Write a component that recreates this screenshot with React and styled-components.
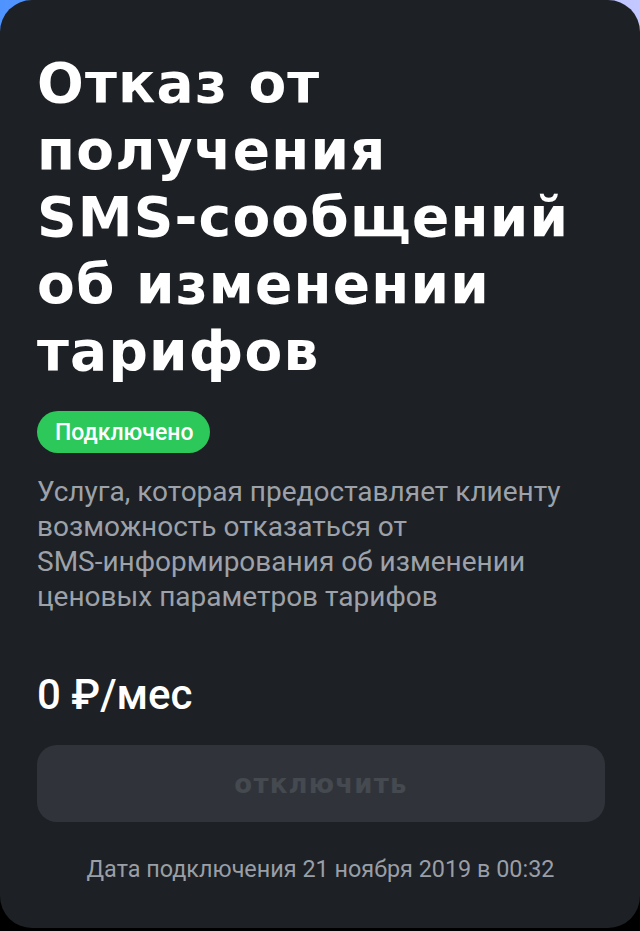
import styled, { createGlobalStyle } from 'styled-components';

const Global = createGlobalStyle`
    html, body {
        margin: 0;
        padding: 0;
    }
    body {
        background: linear-gradient(90deg, #4f93ff 0%, #8fb0ff 60%, #c4c8ff 100%) top / 100% 60px no-repeat, #000;
        font-family: Roboto, "Noto Sans", sans-serif;
    }
`

export default function App() {
    return (
        <>
            <Global />
            <Card>
                <Title>
                    Отказ от<br />
                    получения<br />
                    SMS-сообщений<br />
                    об изменении<br />
                    тарифов
                </Title>
                <Badge>Подключено</Badge>
                <Description>
                    {'Услуга, которая предоставляет клиенту возможность отказаться от SMS\u2011информирования об изменении ценовых параметров тарифов'}
                </Description>
                <Price>0 ₽/мес</Price>
                <Button disabled>отключить</Button>
                <Footer>Дата подключения 21 ноября 2019 в 00:32</Footer>
            </Card>
        </>
    )
}

const Card = styled.div`
    height: 928px;
    box-sizing: border-box;
    background-color: #1d2024;
    border-radius: 32px;
    padding: 50px 36px 0 37px;
    display: flex;
    flex-direction: column;
    align-items: flex-start;
`
const Title = styled.h1`
    margin: 0;
    font-family: "DejaVu Sans", sans-serif;
    font-weight: 700;
    font-size: 55px;
    line-height: 67px;
    letter-spacing: 1.2px;
    color: #ffffff;
`
const Badge = styled.span`
    margin-top: 26px;
    height: 42px;
    padding: 0 17px 0 18px;
    border-radius: 21px;
    background-color: #2dc85a;
    color: #ffffff;
    font-size: 23px;
    font-weight: 500;
    display: flex;
    align-items: center;
`
const Description = styled.p`
    margin: 21px 0 0;
    width: 567px;
    font-size: 28px;
    line-height: 35px;
    color: #9da2aa;
`
const Price = styled.div`
    margin-top: 57px;
    font-size: 42px;
    line-height: 48px;
    font-weight: 500;
    color: #ffffff;
`
const Button = styled.button`
    margin-top: 26px;
    width: 568px;
    height: 77px;
    border: none;
    border-radius: 20px;
    background-color: #30343a;
    color: #454950;
    font-family: "DejaVu Sans", sans-serif;
    font-weight: 700;
    font-size: 26px;
    letter-spacing: 1.2px;
`
const Footer = styled.div`
    margin-top: 33px;
    align-self: center;
    font-size: 23.4px;
    color: #9a9ea6;
`
